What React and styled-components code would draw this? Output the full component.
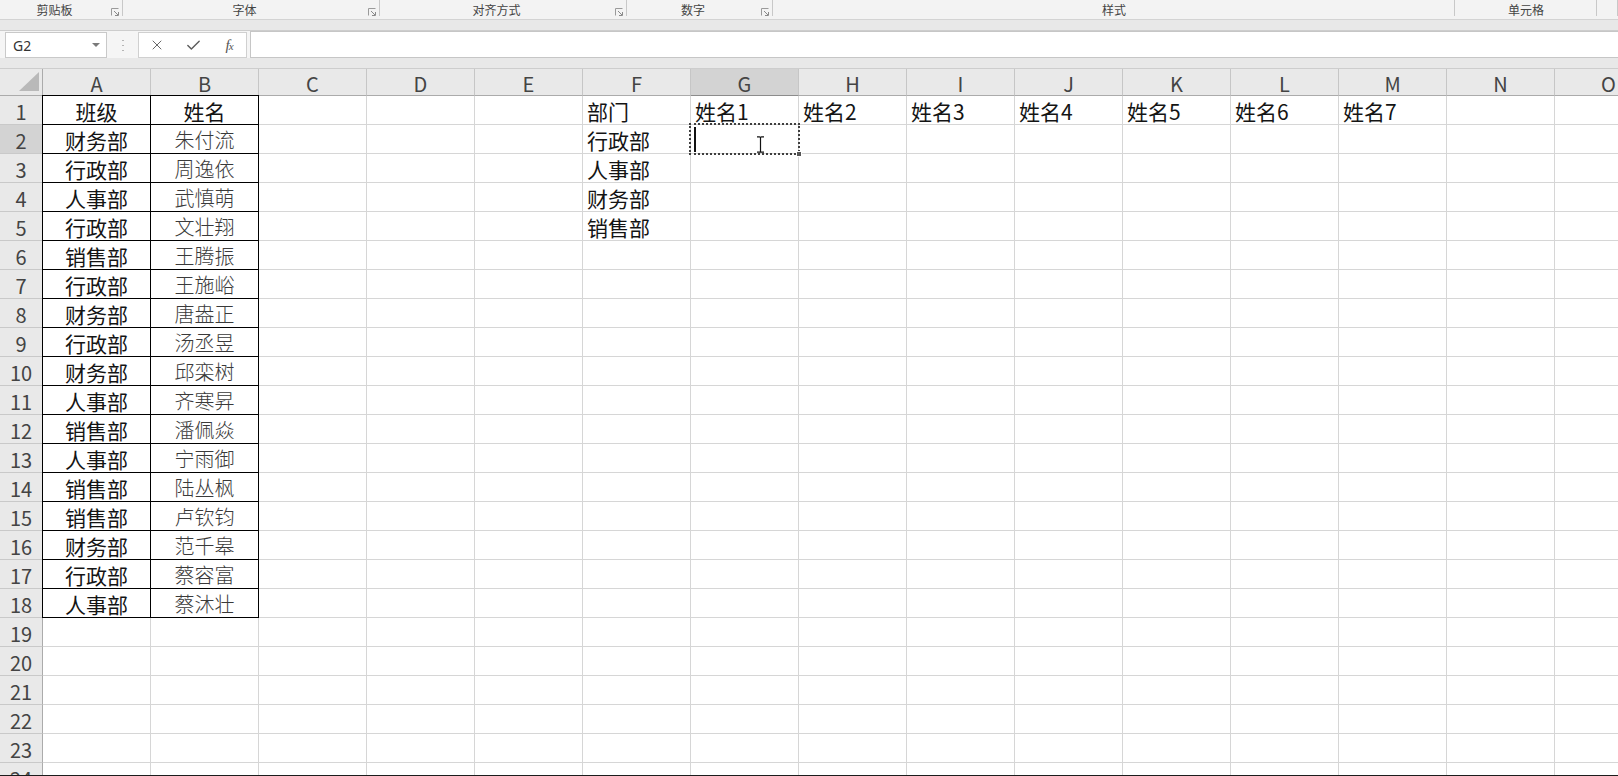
import React from "react";
import styled, { createGlobalStyle, css } from "styled-components";
import { X, Check } from "lucide-react";

const GlobalStyle = createGlobalStyle`
  html, body {
    margin: 0;
    padding: 0;
    background: #fff;
  }
  body {
    font-family: "Noto Sans CJK SC", "Noto Sans", sans-serif;
  }
`;

const Window = styled.div`
  width: 1618px;
  height: 776px;
  box-sizing: border-box;
  overflow: hidden;
  display: flex;
  flex-direction: column;
  background: #fff;
  border-bottom: 1px solid #1c1c1c;
`;

/* ribbon group captions */
const Ribbon = styled.div`
  height: 20px;
  flex-shrink: 0;
  box-sizing: border-box;
  display: flex;
  background: #f3f3f3;
  border-bottom: 1px solid #d3d3d3;
`;

const Group = styled.div`
  width: ${(p) => p.$w}px;
  flex-shrink: 0;
  position: relative;
  box-sizing: border-box;
  display: flex;
  align-items: center;
  justify-content: center;
  padding-right: ${(p) => (p.$launcher ? 14 : 0)}px;
  font-size: 12px;
  line-height: 19px;
  color: #444;
  &::after {
    content: "";
    position: absolute;
    right: 0;
    top: 0;
    height: 16px;
    border-right: 1px solid #c8c8c8;
  }
`;

const Launcher = styled.svg`
  position: absolute;
  right: 4px;
  top: 8px;
`;

const Strip = styled.div`
  height: 11px;
  flex-shrink: 0;
  box-sizing: border-box;
  background: #e8e8e8;
  border-bottom: 1px solid #cdcdcd;
`;

/* formula bar */
const FormulaRow = styled.div`
  height: 27px;
  flex-shrink: 0;
  display: flex;
  background: #f5f5f5;
`;

const NameBox = styled.div`
  width: 102px;
  height: 26px;
  margin: 1px 0 0 5px;
  box-sizing: border-box;
  border: 1px solid #c9c9c9;
  background: #fff;
  display: flex;
  align-items: center;
  justify-content: space-between;
  padding: 0 6px 0 7px;
  font-family: "Noto Sans", "Noto Sans CJK SC", sans-serif;
  font-size: 14px;
  color: #333;
`;

const Caret = styled.span`
  width: 0;
  height: 0;
  border-left: 4px solid transparent;
  border-right: 4px solid transparent;
  border-top: 4px solid #7a7a7a;
`;

const Grip = styled.div`
  width: 31px;
  display: flex;
  align-items: center;
  justify-content: center;
`;

const Dots = styled.span`
  width: 2px;
  height: 14px;
  background: radial-gradient(circle, #b5b5b5 0.8px, transparent 1px) 0 0 / 2px 5px;
`;

const FxBox = styled.div`
  width: 109px;
  height: 26px;
  margin-top: 1px;
  box-sizing: border-box;
  border: 1px solid #d0d0d0;
  background: #fff;
  display: grid;
  grid-template-columns: repeat(3, 36px);
  align-items: center;
  justify-items: center;
  color: #5c5c5c;
`;

const Fx = styled.span`
  font-family: "Liberation Serif", serif;
  font-style: italic;
  font-size: 15px;
  color: #555;
  letter-spacing: -1px;
  small {
    font-size: 11px;
  }
`;

const Input = styled.div`
  flex: 1;
  margin-left: 3px;
  box-sizing: border-box;
  border: 1px solid #c6c6c6;
  border-right: none;
  background: #fff;
`;

/* sheet */
const Sheet = styled.div`
  flex: 1;
  overflow: hidden;
  display: grid;
  grid-template-columns: 43px repeat(15, 108px);
  grid-template-rows: 27px;
  grid-auto-rows: 29px;
  background: #fff;
`;

const Corner = styled.div`
  box-sizing: border-box;
  background: #e9e9e9;
  border-right: 1px solid #ababab;
  border-bottom: 1px solid #ababab;
  display: flex;
  align-items: flex-end;
  justify-content: flex-end;
  padding: 0 3px 4px 0;
`;

const ColHead = styled.div`
  box-sizing: border-box;
  background: ${(p) => (p.$active ? "#d3d3d3" : "#e9e9e9")};
  border-right: 1px solid #c6c6c6;
  border-bottom: 1px solid ${(p) => (p.$active ? "#8c8c8c" : "#ababab")};
  display: flex;
  align-items: center;
  justify-content: center;
  padding-top: 2px;
  font-size: 20px;
  color: #444;
`;

const RowHead = styled.div`
  box-sizing: border-box;
  background: ${(p) => (p.$active ? "#d3d3d3" : "#e9e9e9")};
  border-right: 1px solid ${(p) => (p.$active ? "#8c8c8c" : "#ababab")};
  border-bottom: 1px solid #c9c9c9;
  display: flex;
  align-items: flex-end;
  justify-content: center;
  font-size: 20px;
  line-height: 25px;
  color: #444;
`;

const Cell = styled.div`
  position: relative;
  box-sizing: border-box;
  border-right: 1px solid #d6d6d6;
  border-bottom: 1px solid #d6d6d6;
  display: flex;
  align-items: flex-end;
  justify-content: ${(p) => (p.$center ? "center" : "flex-start")};
  padding: 0 4px 1px 4px;
  font-size: 21px;
  line-height: 24px;
  color: #141414;
  white-space: nowrap;
  ${(p) =>
    p.$boxed &&
    css`
      border-right-color: #000;
      border-bottom-color: #000;
    `}
  ${(p) =>
    p.$light &&
    css`
      font-size: 20px;
      font-weight: 300;
      color: #3a3a3a;
    `}
  box-shadow: ${(p) =>
    [
      p.$edgeLeft && "-1px 0 0 #000",
      p.$edgeTop && "0 -1px 0 #000",
      p.$edgeLeft && p.$edgeTop && "-1px -1px 0 #000",
    ]
      .filter(Boolean)
      .join(", ") || "none"};
`;

const ActiveFrame = styled.div`
  position: absolute;
  z-index: 2;
  top: -2px;
  left: -2px;
  right: -2px;
  bottom: -2px;
  border: 2px dotted #3f3f3f;
  pointer-events: none;
  &::after {
    content: "";
    position: absolute;
    right: -4px;
    bottom: -4px;
    width: 4px;
    height: 4px;
    background: #555;
    border: 1px solid #fff;
  }
`;

const TextCaret = styled.span`
  position: absolute;
  left: 3px;
  top: 2px;
  bottom: 1px;
  width: 2px;
  background: #111;
`;

const IBeam = styled.svg`
  position: absolute;
  z-index: 3;
  left: 65px;
  top: 11px;
`;

const columns = ["A", "B", "C", "D", "E", "F", "G", "H", "I", "J", "K", "L", "M", "N", "O"];

const roster = [
  ["班级", "姓名"],
  ["财务部", "朱付流"],
  ["行政部", "周逸依"],
  ["人事部", "武慎萌"],
  ["行政部", "文壮翔"],
  ["销售部", "王腾振"],
  ["行政部", "王施峪"],
  ["财务部", "唐盎正"],
  ["行政部", "汤丞昱"],
  ["财务部", "邱栾树"],
  ["人事部", "齐寒昇"],
  ["销售部", "潘佩焱"],
  ["人事部", "宁雨御"],
  ["销售部", "陆丛枫"],
  ["销售部", "卢钦钧"],
  ["财务部", "范千皋"],
  ["行政部", "蔡容富"],
  ["人事部", "蔡沐壮"],
];

const departments = ["部门", "行政部", "人事部", "财务部", "销售部"];
const nameHeads = ["姓名1", "姓名2", "姓名3", "姓名4", "姓名5", "姓名6", "姓名7"];

const groups = [
  { label: "剪贴板", w: 123, launcher: true },
  { label: "字体", w: 257, launcher: true },
  { label: "对齐方式", w: 247, launcher: true },
  { label: "数字", w: 146, launcher: true },
  { label: "样式", w: 682 },
  { label: "单元格", w: 142 },
  { label: "", w: 21 },
];

function LauncherIcon() {
  return (
    <Launcher width="8" height="8" viewBox="0 0 8 8">
      <path d="M0.5 7.5V0.5H7.5" stroke="#9a9a9a" fill="none" />
      <path d="M3 3L7 7M4 7.5H7.5V4" stroke="#8a8a8a" fill="none" />
    </Launcher>
  );
}

function renderCell(r, c) {
  const col = columns[c];
  const key = `${col}${r}`;

  if (c <= 1 && r <= roster.length) {
    const light = c === 1 && r > 1;
    return (
      <Cell key={key} $center $boxed $light={light} $edgeLeft={c === 0} $edgeTop={r === 1}>
        {roster[r - 1][c]}
      </Cell>
    );
  }

  if (col === "F" && r <= departments.length) {
    return <Cell key={key}>{departments[r - 1]}</Cell>;
  }

  if (r === 1 && c >= 6 && c <= 12) {
    return <Cell key={key}>{nameHeads[c - 6]}</Cell>;
  }

  if (key === "G2") {
    return (
      <Cell key={key}>
        <ActiveFrame />
        <TextCaret />
        <IBeam width="9" height="17" viewBox="0 0 9 17">
          <path d="M1 0.8H3.5C4 0.8 4.5 1.3 4.5 1.8C4.5 1.3 5 0.8 5.5 0.8H8M4.5 1.8V15.2M1 16.2H3.5C4 16.2 4.5 15.7 4.5 15.2C4.5 15.7 5 16.2 5.5 16.2H8" stroke="#111" strokeWidth="1.2" fill="none" />
        </IBeam>
      </Cell>
    );
  }

  return <Cell key={key} />;
}

export default function App() {
  const rows = Array.from({ length: 24 }, (_, i) => i + 1);

  return (
    <>
      <GlobalStyle />
      <Window>
        <Ribbon>
          {groups.map((g, i) => (
            <Group key={i} $w={g.w} $launcher={g.launcher}>
              {g.label}
              {g.launcher && <LauncherIcon />}
            </Group>
          ))}
        </Ribbon>
        <Strip />
        <FormulaRow>
          <NameBox>
            G2
            <Caret />
          </NameBox>
          <Grip>
            <Dots />
          </Grip>
          <FxBox>
            <X size={16} strokeWidth={1.4} />
            <Check size={17} strokeWidth={2} />
            <Fx>
              f<small>x</small>
            </Fx>
          </FxBox>
          <Input />
        </FormulaRow>
        <Strip />
        <Sheet>
          <Corner>
            <svg width="20" height="19" viewBox="0 0 20 19">
              <polygon points="20,0 20,19 0,19" fill="#b9b9b9" />
            </svg>
          </Corner>
          {columns.map((c) => (
            <ColHead key={c} $active={c === "G"}>
              {c}
            </ColHead>
          ))}
          {rows.map((r) => (
            <React.Fragment key={r}>
              <RowHead $active={r === 2}>{r}</RowHead>
              {columns.map((_, c) => renderCell(r, c))}
            </React.Fragment>
          ))}
        </Sheet>
      </Window>
    </>
  );
}
